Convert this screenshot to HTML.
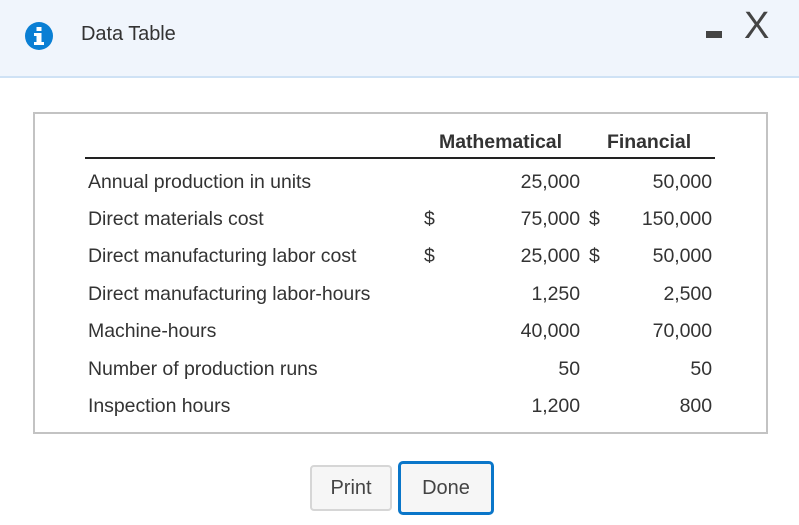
<!DOCTYPE html>
<html><head><style>
body{margin:0;width:799px;height:525px;background:#fff;font-family:"Liberation Sans",Arial,sans-serif;position:relative;overflow:hidden;color:#333}
.hdr{position:absolute;left:0;top:0;width:799px;height:76px;background:#f0f5fc;border-bottom:2px solid #cfe2f5}
.t{position:absolute;font-size:19.5px;white-space:nowrap;line-height:1;letter-spacing:-0.05px}
.box{position:absolute;left:33px;top:112px;width:731px;height:318px;border:2px solid #c3c3c3}
.r{text-align:right}
.btn{position:absolute;background:#f6f6f6;font-size:20px;color:#444;text-align:center;box-sizing:border-box}
</style></head><body>
<div class="hdr"></div>
<svg style="position:absolute;left:24px;top:21px" width="30" height="30" viewBox="0 0 30 30"><circle cx="15" cy="15" r="14" fill="#0a7fd4"/><rect x="12.5" y="6" width="5" height="4" fill="#fff"/><path d="M10 12h7.5v9h2.5v3h-10v-3h2.5v-6h-2.5z" fill="#fff"/></svg>
<div class="t" style="left:81px;top:24px;font-size:20px;color:#333">Data Table</div>
<div style="position:absolute;left:706px;top:31px;width:16px;height:7px;background:#444"></div>
<div class="t" style="left:744px;top:7px;font-size:38px;color:#444;letter-spacing:0">X</div>
<div class="box"></div>
<div class="t" style="left:439px;top:133px;font-weight:bold">Mathematical</div>
<div class="t" style="left:607px;top:133px;font-weight:bold">Financial</div>
<div style="position:absolute;left:85px;top:157px;width:630px;height:2px;background:#222"></div>
<div class="t" style="left:88px;top:173px">Annual production in units</div>
<div class="t" style="left:88px;top:210px">Direct materials cost</div>
<div class="t" style="left:88px;top:247px">Direct manufacturing labor cost</div>
<div class="t" style="left:88px;top:285px">Direct manufacturing labor-hours</div>
<div class="t" style="left:88px;top:322px">Machine-hours</div>
<div class="t" style="left:88px;top:360px">Number of production runs</div>
<div class="t" style="left:88px;top:397px">Inspection hours</div>
<div class="t" style="left:424px;top:210px">$</div>
<div class="t" style="left:424px;top:247px">$</div>
<div class="t" style="left:589px;top:210px">$</div>
<div class="t" style="left:589px;top:247px">$</div>
<div class="t r" style="right:219px;top:173px">25,000</div>
<div class="t r" style="right:219px;top:210px">75,000</div>
<div class="t r" style="right:219px;top:247px">25,000</div>
<div class="t r" style="right:219px;top:285px">1,250</div>
<div class="t r" style="right:219px;top:322px">40,000</div>
<div class="t r" style="right:219px;top:360px">50</div>
<div class="t r" style="right:219px;top:397px">1,200</div>
<div class="t r" style="right:87px;top:173px">50,000</div>
<div class="t r" style="right:87px;top:210px">150,000</div>
<div class="t r" style="right:87px;top:247px">50,000</div>
<div class="t r" style="right:87px;top:285px">2,500</div>
<div class="t r" style="right:87px;top:322px">70,000</div>
<div class="t r" style="right:87px;top:360px">50</div>
<div class="t r" style="right:87px;top:397px">800</div>
<div class="btn" style="left:310px;top:465px;width:82px;height:46px;border:2px solid #d6d6d6;border-radius:4px;line-height:42px">Print</div>
<div class="btn" style="left:398px;top:461px;width:96px;height:54px;border:3px solid #0a76c9;border-radius:5px;line-height:49px">Done</div>
</body></html>
